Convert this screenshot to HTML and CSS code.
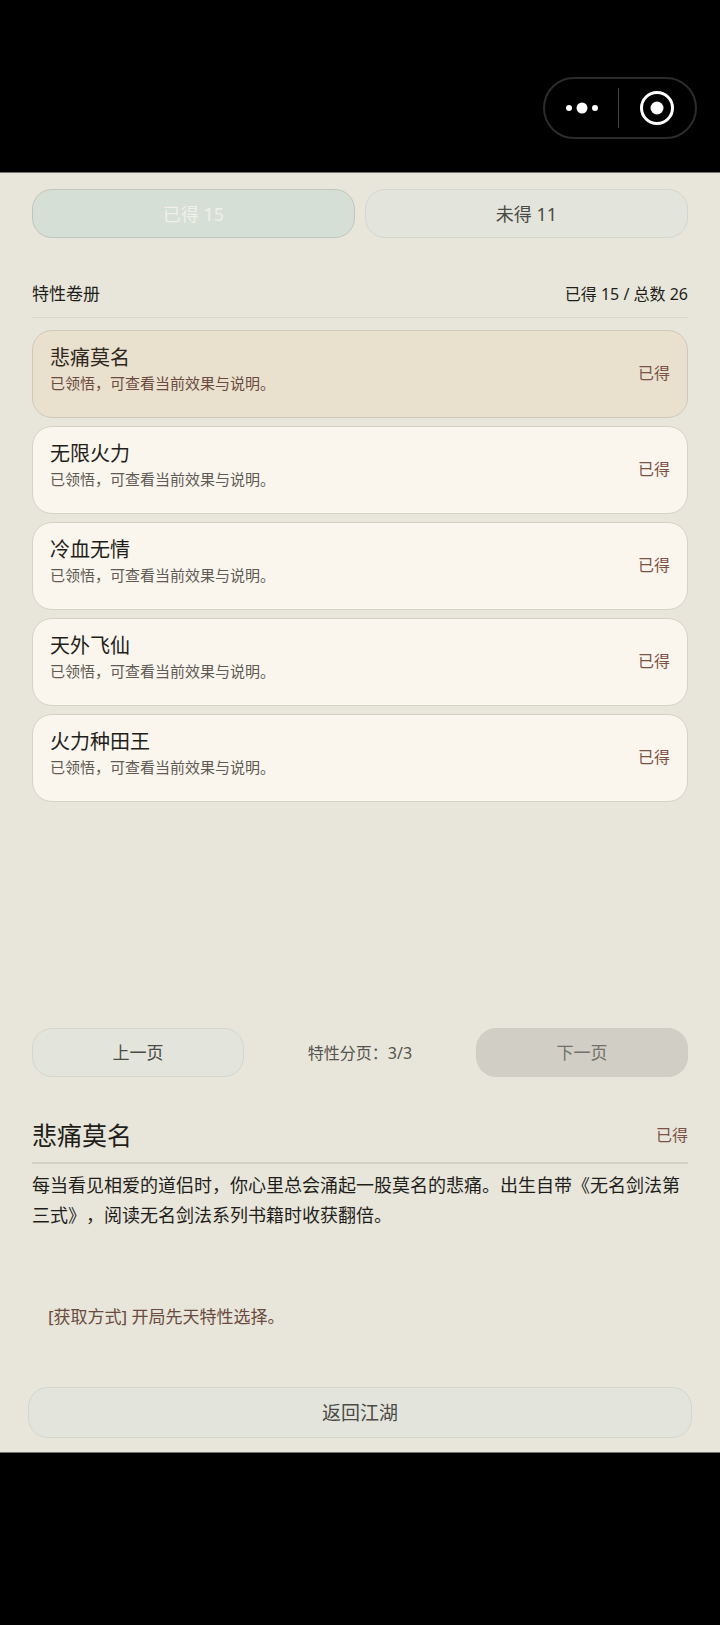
FILE: index.html
```
<!DOCTYPE html>
<html lang="zh-CN">
<head>
    <meta charset="UTF-8">
    <meta name="viewport" content="width=device-width, initial-scale=1.0">
    <title>特性卷册</title>
    <link rel="stylesheet" href="styles.css">
</head>
<body>
    <header class="top-bar">
        <div class="capsule">
            <button type="button" class="capsule-btn" aria-label="更多">
                <svg width="34" height="12" viewBox="0 0 34 12" fill="#fff">
                    <circle cx="4" cy="6" r="3"/>
                    <circle cx="17" cy="6" r="5.5"/>
                    <circle cx="30" cy="6" r="3"/>
                </svg>
            </button>
            <button type="button" class="capsule-btn close" aria-label="关闭">
                <svg width="36" height="36" viewBox="0 0 36 36">
                    <circle cx="18" cy="18" r="15.5" fill="none" stroke="#fff" stroke-width="3"/>
                    <circle cx="18" cy="18" r="6.5" fill="#fff"/>
                </svg>
            </button>
        </div>
    </header>

    <main class="panel">
        <div class="tabs">
            <button type="button" class="btn active">已得 15</button>
            <button type="button" class="btn">未得 11</button>
        </div>

        <div class="list-head">
            <h2>特性卷册</h2>
            <span class="total">已得 15 / 总数 26</span>
        </div>

        <div class="trait-list">
            <button type="button" class="trait selected">
                <span class="trait-text">
                    <span class="trait-name">悲痛莫名</span>
                    <span class="trait-desc">已领悟，可查看当前效果与说明。</span>
                </span>
                <span class="status">已得</span>
            </button>
            <button type="button" class="trait">
                <span class="trait-text">
                    <span class="trait-name">无限火力</span>
                    <span class="trait-desc">已领悟，可查看当前效果与说明。</span>
                </span>
                <span class="status">已得</span>
            </button>
            <button type="button" class="trait">
                <span class="trait-text">
                    <span class="trait-name">冷血无情</span>
                    <span class="trait-desc">已领悟，可查看当前效果与说明。</span>
                </span>
                <span class="status">已得</span>
            </button>
            <button type="button" class="trait">
                <span class="trait-text">
                    <span class="trait-name">天外飞仙</span>
                    <span class="trait-desc">已领悟，可查看当前效果与说明。</span>
                </span>
                <span class="status">已得</span>
            </button>
            <button type="button" class="trait">
                <span class="trait-text">
                    <span class="trait-name">火力种田王</span>
                    <span class="trait-desc">已领悟，可查看当前效果与说明。</span>
                </span>
                <span class="status">已得</span>
            </button>
        </div>

        <div class="pager">
            <button type="button" class="btn">上一页</button>
            <span class="page-info">特性分页：3/3</span>
            <button type="button" class="btn" disabled>下一页</button>
        </div>

        <section class="detail">
            <div class="detail-head">
                <h1>悲痛莫名</h1>
                <span class="status">已得</span>
            </div>
            <p class="detail-text">每当看见相爱的道侣时，你心里总会涌起一股莫名的悲痛。出生自带《无名剑法第三式》，阅读无名剑法系列书籍时收获翻倍。</p>
            <p class="source">[获取方式] 开局先天特性选择。</p>
        </section>

        <button type="button" class="btn back">返回江湖</button>
    </main>
</body>
</html>
```
FILE: styles.css
```
* {
    box-sizing: border-box;
}

body {
    margin: 0;
    min-height: 100vh;
    background-color: #000;
    color: #1f1e1a;
    font-family: "Noto Sans", "Noto Sans CJK SC", sans-serif;
    text-spacing-trim: space-all;
}

h1, h2, p {
    margin: 0;
    font-weight: 400;
}

button {
    margin: 0;
    padding: 0;
    font-family: inherit;
    color: inherit;
    cursor: pointer;
}

/* 顶部胶囊 */
.top-bar {
    display: flex;
    justify-content: flex-end;
    padding: 77px 23px 33px;
}

.capsule {
    display: flex;
    align-items: center;
    width: 154px;
    height: 62px;
    border: 2px solid #2c2c2c;
    border-radius: 31px;
}

.capsule-btn {
    display: flex;
    align-items: center;
    justify-content: center;
    width: 73px;
    height: 40px;
    background: none;
    border: 0;
}

.capsule-btn.close {
    flex: 1;
    border-left: 1px solid #444;
}

.panel {
    padding: 16px 32px 14px;
    background-color: #e8e6da;
    border-top: 1px solid #74736d;
    border-bottom: 1px solid #74736d;
}

/* 按钮 */
.btn {
    height: 49px;
    padding-bottom: 2px;
    background-color: #e3e5dd;
    border: 1px solid #d3d7cf;
    border-radius: 20px;
    color: #4b4b46;
    font-size: 17px;
}

.btn.active {
    background-color: #d5dfd6;
    border-color: #c0c6bc;
    color: #f2f0e6;
}

.btn:disabled {
    background-color: #d1cec5;
    border-color: #d1cec5;
    color: #73716a;
    cursor: default;
}

.tabs {
    display: grid;
    grid-template-columns: 1fr 1fr;
    gap: 10px;
}

.tabs .btn {
    font-size: 18px;
}

.list-head {
    display: flex;
    align-items: center;
    justify-content: space-between;
    margin-top: 32px;
    padding: 12px 0 11px;
    border-bottom: 1px solid #dad8ce;
    line-height: 24px;
}

.list-head h2 {
    font-size: 17px;
}

.total {
    font-size: 16px;
}

/* 特性列表 */
.trait-list {
    display: flex;
    flex-direction: column;
    gap: 8px;
    min-height: 698px;
    padding-top: 12px;
}

.trait {
    display: flex;
    align-items: center;
    justify-content: space-between;
    height: 88px;
    padding: 0 17px 4px;
    background-color: #faf5ed;
    border: 1px solid #d5d3c6;
    border-radius: 20px;
    text-align: left;
}

.trait.selected {
    background-color: #e9e0ce;
    border-color: #cfc9b7;
    color: #2f281e;
}

.trait-text {
    display: flex;
    flex-direction: column;
    padding-bottom: 6px;
}

.trait-name {
    font-size: 20px;
    line-height: 28px;
}

.trait-desc {
    color: #5f5b55;
    font-size: 15px;
    line-height: 22px;
}

.selected .trait-desc {
    color: #6b4b40;
}

.status {
    color: #7a5347;
    font-size: 16px;
}

.pager {
    display: grid;
    grid-template-columns: 1fr 1fr 1fr;
    gap: 10px;
    align-items: center;
    margin-top: 12px;
}

.page-info {
    padding-bottom: 2px;
    color: #55544e;
    font-size: 16px;
    text-align: center;
}

/* 特性详情 */
.detail {
    min-height: 310px;
    padding-top: 39px;
}

.detail-head {
    display: flex;
    align-items: center;
    justify-content: space-between;
    padding-bottom: 8px;
    border-bottom: 2px solid #d3d0c5;
    line-height: 38px;
}

.detail-head h1 {
    font-size: 25px;
}

.detail-text {
    padding-top: 6px;
    font-size: 18px;
    line-height: 30px;
}

.source {
    margin-top: 73px;
    padding: 0 16px;
    color: #6b4b40;
    font-size: 17px;
    line-height: 28px;
}

.back {
    display: block;
    width: calc(100% + 8px);
    height: 51px;
    margin: 0 -4px;
    font-size: 19px;
}
```
